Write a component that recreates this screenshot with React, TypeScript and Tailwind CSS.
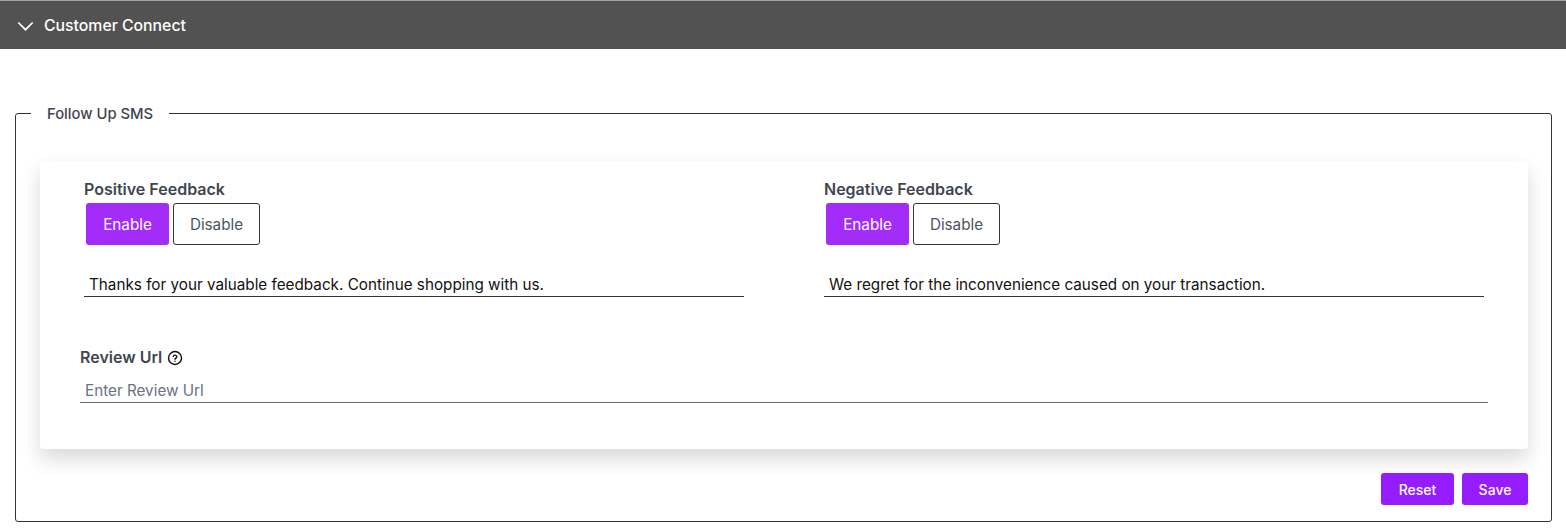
import React, { useState } from 'react';

function HelpIcon() {
  return (
    <svg width="16" height="16" viewBox="0 0 16 16" fill="none" stroke="#111" strokeWidth="1.4" className="ml-[5px] mt-[1px]">
      <circle cx="8" cy="8" r="6.5" />
      <path d="M6.2 6.4a1.85 1.85 0 0 1 3.6.4c0 1.2-1.8 1.4-1.8 2.4" strokeLinecap="round" />
      <circle cx="8" cy="11.3" r="0.7" fill="#111" stroke="none" />
    </svg>
  );
}

function FeedbackColumn({ title, message }: { title: string; message: string }) {
  const [enabled, setEnabled] = useState(true);
  return (
    <div className="w-[660px]">
      <div className="text-[16px] leading-[20px] font-semibold text-[#3f464f]">{title}</div>
      <div className="flex gap-1 mt-1 ml-[2px]">
        <button
          onClick={() => setEnabled(true)}
          className={`w-[83px] h-[42px] pt-[2px] rounded-[3px] text-[15.25px] ${enabled ? 'bg-[#a42cf9] text-white' : 'border border-[#333] text-[#4b5563]'}`}
        >
          Enable
        </button>
        <button
          onClick={() => setEnabled(false)}
          className={`w-[87px] h-[42px] pt-[2px] rounded-[3px] text-[15.25px] ${!enabled ? 'bg-[#a42cf9] text-white' : 'border border-[#333] text-[#4b5563]'}`}
        >
          Disable
        </button>
      </div>
      <input
        defaultValue={message}
        className="block w-full mt-[27px] h-[25px] px-[5px] text-[15.25px] text-[#111] border-b border-[#333] outline-none bg-transparent"
      />
    </div>
  );
}

export default function App() {
  return (
    <div className="min-h-[530px] bg-white font-['Inter',sans-serif]">
      <div className="h-[49px] bg-[#525252] flex items-center pl-[17px] pt-[2px] border-t border-[#a0a4a8]">
        <svg width="17" height="17" viewBox="0 0 17 17" fill="none" stroke="#fff" strokeWidth="1.7">
          <path d="M1.3 4.5l7.2 7.2 7.2-7.2" />
        </svg>
        <span className="ml-[10px] text-[15.8px] font-medium text-white">Customer Connect</span>
      </div>

      <fieldset className="mr-[14px] ml-[15px] mt-[53px] h-[420px] border border-[#333] rounded-[3px] pl-[24px] pr-[23px]">
        <legend className="-ml-[9px] px-4 pt-[2px] text-[14.8px] leading-[20px] font-medium text-[#3f464f]">Follow Up SMS</legend>

        <div className="mt-[37px] h-[288px] bg-white rounded-[4px] shadow-[0_10px_20px_rgba(0,0,0,0.15)] pt-[18px] pl-[44px] pr-[40px]">
          <div className="flex gap-[80px]">
            <FeedbackColumn title="Positive Feedback" message="Thanks for your valuable feedback. Continue shopping with us." />
            <FeedbackColumn title="Negative Feedback" message="We regret for the inconvenience caused on your transaction." />
          </div>
          <div className="-ml-[4px] mt-[48px]">
            <div className="flex items-center text-[16px] leading-[24px] font-semibold text-[#3f464f]">
              Review Url
              <HelpIcon />
            </div>
            <input
              placeholder="Enter Review Url"
              className="block w-full mt-[9px] h-[25px] px-[5px] text-[15.25px] text-[#111] placeholder:text-[#6b7280] border-b border-[#6b6b6b] outline-none bg-transparent"
            />
          </div>
        </div>

        <div className="flex justify-end gap-2 mt-[24px]">
          <button className="w-[73px] h-[32px] rounded-[3px] bg-[#951cfd] text-white text-[14px] font-medium">Reset</button>
          <button className="w-[66px] h-[32px] rounded-[3px] bg-[#951cfd] text-white text-[14px] font-medium">Save</button>
        </div>
      </fieldset>
    </div>
  );
}
